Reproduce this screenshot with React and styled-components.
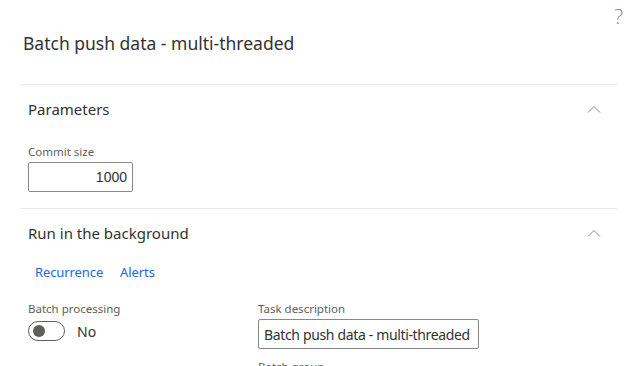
import React from "react";
import styled, { createGlobalStyle } from "styled-components";

const GlobalStyle = createGlobalStyle`
  html, body {
    margin: 0;
    padding: 0;
    background: #ffffff;
    overflow: hidden;
  }
  body {
    font-family: "Noto Sans", "Open Sans", sans-serif;
    color: #323130;
  }
`;

const Page = styled.div`
  width: 638px;
  height: 366px;
  position: relative;
  overflow: hidden;
  background: #fff;
`;

const HelpMark = styled.div`
  position: absolute;
  top: 2px;
  right: 15px;
  font-size: 21px;
  font-weight: 300;
  color: #8a8886;
  font-family: "Open Sans", sans-serif;
`;

const Header = styled.div`
  margin: 0 21px 0 20px;
  padding: 32px 0 0 3px;
  height: 52px;
  border-bottom: 1px solid #edebe9;
`;

const Title = styled.h1`
  margin: 0;
  font-size: 17.5px;
  font-weight: 400;
  color: #323130;
  line-height: 22px;
`;

const Section = styled.section`
  margin: 0 21px 0 20px;
  border-bottom: ${(p) => (p.$last ? "none" : "1px solid #edebe9")};
  padding: 0 8px 16px;
`;

const SectionHead = styled.div`
  display: flex;
  align-items: center;
  justify-content: space-between;
  height: 48px;
  padding-right: 8px;
  margin-bottom: ${(p) => p.$gap || "0"};
`;

const SectionTitle = styled.h2`
  margin: 0;
  font-size: 15px;
  font-weight: 400;
  color: #323130;
`;

const Field = styled.div`
  display: flex;
  flex-direction: column;
  width: ${(p) => p.$width || "auto"};
`;

const Label = styled.label`
  font-size: 11.5px;
  color: #605e5c;
  line-height: 16px;
  margin-bottom: 2px;
  margin-top: ${(p) => p.$top || "0"};
`;

const Input = styled.input`
  box-sizing: border-box;
  width: ${(p) => p.$width};
  height: 30px;
  border: 1px solid #8a8886;
  border-radius: 2px;
  padding: 0 5px 0 5px;
  font-size: 14px;
  letter-spacing: ${(p) => (p.$right ? "0" : "-0.35px")};
  color: #323130;
  text-align: ${(p) => (p.$right ? "right" : "left")};
  font-family: ${(p) =>
    p.$right ? '"Liberation Sans", Arial, sans-serif' : '"Noto Sans", sans-serif'};
  background: #fff;
  outline: none;
`;

const Links = styled.div`
  display: flex;
  gap: 17px;
  padding: 6px 0 0 7px;
  height: 34px;
`;

const Link = styled.a`
  font-size: 13px;
  letter-spacing: -0.1px;
  color: #2266e3;
  text-decoration: none;
  line-height: 18px;
`;

const Row = styled.div`
  display: flex;
  margin-top: 4px;
`;

const ToggleRow = styled.div`
  display: flex;
  align-items: center;
  gap: 12px;
  margin-top: 2px;
`;

const Toggle = styled.span`
  box-sizing: border-box;
  width: 37px;
  height: 20px;
  border: 1px solid #605e5c;
  border-radius: 10px;
  display: flex;
  align-items: center;
  padding-left: 4px;
  &::after {
    content: "";
    width: 12px;
    height: 12px;
    border-radius: 50%;
    background: #605e5c;
  }
`;

const ToggleText = styled.span`
  font-size: 14px;
  color: #323130;
`;

const Chevron = () => (
  <svg width="14" height="8" viewBox="0 0 14 8">
    <path d="M1 7.5 L7 1.5 L13 7.5" fill="none" stroke="#8a8886" strokeWidth="1" />
  </svg>
);

export default function App() {
  return (
    <Page>
      <GlobalStyle />
      <HelpMark>?</HelpMark>
      <Header>
        <Title>Batch push data - multi-threaded</Title>
      </Header>
      <Section>
        <SectionHead $gap="11px">
          <SectionTitle>Parameters</SectionTitle>
          <Chevron />
        </SectionHead>
        <Field>
          <Label>Commit size</Label>
          <Input $width="105px" $right readOnly value="1000" />
        </Field>
      </Section>
      <Section $last>
        <SectionHead>
          <SectionTitle>Run in the background</SectionTitle>
          <Chevron />
        </SectionHead>
        <Links>
          <Link>Recurrence</Link>
          <Link>Alerts</Link>
        </Links>
        <Row>
          <Field $width="230px">
            <Label>Batch processing</Label>
            <ToggleRow>
              <Toggle />
              <ToggleText>No</ToggleText>
            </ToggleRow>
          </Field>
          <Field>
            <Label>Task description</Label>
            <Input $width="221px" readOnly value="Batch push data - multi-threaded" />
            <Label $top="10px">Batch group</Label>
          </Field>
        </Row>
      </Section>
    </Page>
  );
}
